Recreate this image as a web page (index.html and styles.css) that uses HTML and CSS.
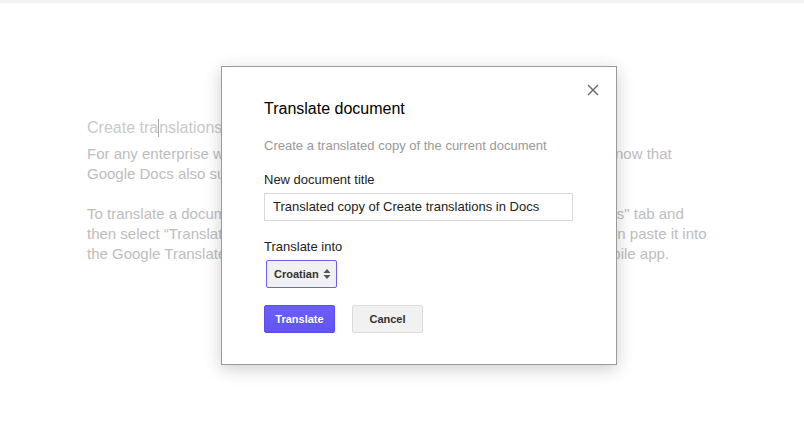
FILE: index.html
```html
<!DOCTYPE html>
<html>
<head>
<meta charset="utf-8">
<link rel="stylesheet" href="styles.css">
</head>
<body>
<div class="topbar"></div>
<div class="doc">
  <div class="doc-title">Create tra<span class="cursor"></span>nslations in Docs</div>
  <p class="para">For any enterprise with offices and users in multiple countries, it’s important to know that<br>Google Docs also supports translation.</p>
  <p class="para">To translate a document, first open it in Google Docs, then just click on the "Tools" tab and<br>then select “Translate document.” Alternatively, you can copy all the text and then paste it into<br>the Google Translate website on your computer, or on the Google Translate mobile app.</p>
</div>
<div class="dialog">
  <button class="close" aria-label="Close">
    <svg width="12" height="12" viewBox="0 0 12 12"><path d="M1 1L11 11M11 1L1 11" stroke="#666" stroke-width="1.4" fill="none"/></svg>
  </button>
  <div class="dlg-title">Translate document</div>
  <div class="dlg-sub">Create a translated copy of the current document</div>
  <div class="label">New document title</div>
  <div class="input">Translated copy of Create translations in Docs</div>
  <div class="label label2">Translate into</div>
  <div class="select">
    <span>Croatian</span>
    <svg width="8" height="12" viewBox="0 0 8 12"><path d="M4 1L7.5 5H0.5Z M4 11L7.5 7H0.5Z" fill="#555"/></svg>
  </div>
  <div class="buttons">
    <button class="btn primary">Translate</button>
    <button class="btn">Cancel</button>
  </div>
</div>
</body>
</html>
```
FILE: styles.css
```css
html, body {
  margin: 0;
  padding: 0;
  background: #fff;
  font-family: "Liberation Sans", Arial, sans-serif;
}
.topbar {
  height: 3px;
  background: #f3f3f3;
}
.doc {
  padding: 115px 0 0 87px;
}
.doc-title {
  font-size: 16px;
  line-height: 20px;
  color: #c9c9c9;
  white-space: nowrap;
}
.cursor {
  display: inline-block;
  width: 1px;
  height: 18px;
  background: #aaa;
  vertical-align: -4px;
}
.para {
  margin: 6px 0 0;
  font-size: 15px;
  line-height: 20px;
  color: #bdbdbd;
  white-space: nowrap;
}
.para + .para {
  margin-top: 20px;
}
.dialog {
  position: absolute;
  left: 221px;
  top: 66px;
  width: 352px;
  height: 265px;
  padding: 32px 0 0 42px;
  background: #fff;
  border: 1px solid #9a9a9a;
  box-shadow: 0 4px 16px rgba(0,0,0,0.2);
}
.close {
  position: absolute;
  right: 16px;
  top: 16px;
  width: 14px;
  height: 14px;
  padding: 0;
  border: 0;
  background: none;
  display: flex;
  align-items: center;
  justify-content: center;
}
.dlg-title {
  font-size: 16px;
  line-height: 20px;
  color: #000;
}
.dlg-sub {
  margin-top: 19px;
  font-size: 13px;
  line-height: 16px;
  color: #999;
}
.label {
  margin-top: 18px;
  font-size: 13px;
  line-height: 16px;
  color: #222;
}
.label2 {
  margin-top: 18px;
}
.input {
  margin-top: 5px;
  width: 291px;
  height: 26px;
  padding: 0 8px;
  border: 1px solid #d9d9d9;
  font-size: 13px;
  line-height: 26px;
  color: #222;
}
.select {
  margin: 5px 0 0 2px;
  width: 69px;
  height: 26px;
  box-sizing: content-box;
  border: 1px solid #6d5cf5;
  border-radius: 2px;
  background: #f1f1f1;
  display: flex;
  align-items: center;
  justify-content: space-between;
  padding: 0;
}
.select span {
  margin-left: 7px;
  font-size: 11px;
  font-weight: bold;
  color: #333;
}
.select svg {
  margin-right: 5px;
}
.buttons {
  margin-top: 17px;
  display: flex;
  gap: 17px;
}
.btn {
  width: 71px;
  height: 28px;
  padding: 0;
  font-family: "Liberation Sans", Arial, sans-serif;
  font-size: 11px;
  font-weight: bold;
  color: #333;
  background: #f1f1f1;
  border: 1px solid #dcdcdc;
  border-radius: 2px;
}
.btn.primary {
  color: #fff;
  background: linear-gradient(#6c5ef7, #6354f3);
  border-color: #5b4cf0;
  text-shadow: 0 1px 1px rgba(0,0,0,0.1);
}
```
